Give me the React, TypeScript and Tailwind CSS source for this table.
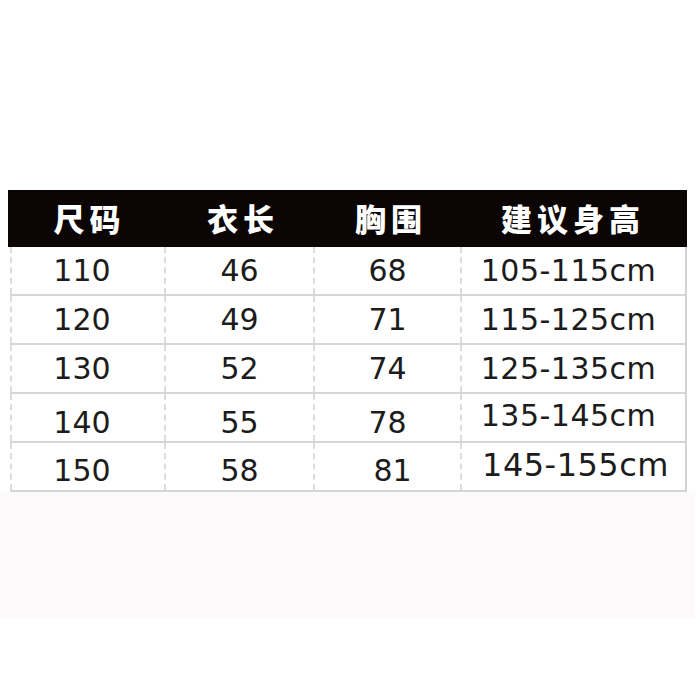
import React from "react";

const rows = [
  ["110", "46", "68", "105-115cm"],
  ["120", "49", "71", "115-125cm"],
  ["130", "52", "74", "125-135cm"],
  ["140", "55", "78", "135-145cm"],
  ["150", "58", "81", "145-155cm"],
];

const headers = ["尺码", "衣长", "胸围", "建议身高"];

export default function App() {
  return (
    <div className="w-[700px] h-[700px] bg-white pt-[190px] overflow-hidden">
      {/* 表头 */}
      <div
        className="ml-[8px] w-[679px] h-[57px] bg-[#0b0505] grid grid-cols-[158px_149px_147px_225px] text-white font-black text-[31px] tracking-[5px]"
        style={{ fontFamily: '"Noto Sans CJK SC", "Noto Sans", sans-serif' }}
      >
        {headers.map((h, i) => (
          <div
            key={h}
            className={`flex items-center justify-center pl-[5px] ${i === 3 ? "pr-[8px]" : ""}`}
          >
            {h}
          </div>
        ))}
      </div>

      {/* 尺码数据 */}
      <div
        className="ml-[10px] w-[677px] border-r-2 border-[#d4d4d4]"
        style={{ fontFamily: '"DejaVu Sans", "Noto Sans CJK SC", sans-serif' }}
      >
        {rows.map((r, i) => (
          <div
            key={r[0]}
            className="grid grid-cols-[156px_149px_147px_225px] grid-rows-[47px] h-[49px] border-b-2 border-[#d6d6d6] text-[30px] leading-[30px] text-[#1c1c1c]"
          >
            {r.map((c, j) => (
              <div
                key={j}
                className={`flex items-center justify-center ${
                  j < 3 ? "border-r-2 border-dashed border-[#dcdcdc]" : ""
                } ${j === 0 ? "border-l-2 pr-[12px]" : ""} ${j === 3 ? "pr-[12px] tracking-[0.5px]" : ""}`}
              >
                <span
                  className={
                    i === 3 && j < 3
                      ? "translate-y-[5px]"
                      : i === 4
                      ? j === 3
                        ? "translate-y-[-2px] translate-x-[7px] text-[32px]"
                        : j === 2
                        ? "translate-y-[4px] translate-x-[5px]"
                        : "translate-y-[4px]"
                      : i === 3
                      ? "translate-y-[-2px]"
                      : ""
                  }
                >
                  {c}
                </span>
              </div>
            ))}
          </div>
        ))}
      </div>

      <div className="w-[695px] h-[126px] bg-[#fcfafa]" />
    </div>
  );
}
